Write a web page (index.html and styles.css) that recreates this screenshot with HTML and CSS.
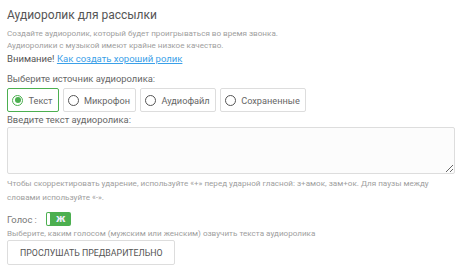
FILE: index.html
```html
<!DOCTYPE html>
<html lang="ru">
<head>
  <meta charset="UTF-8">
  <title>Аудиоролик для рассылки</title>
  <link rel="stylesheet" href="styles.css">
</head>
<body>

<section class="audio-form">
  <h1>Аудиоролик для рассылки</h1>
  <p class="hint">Создайте аудиоролик, который будет проигрываться во время звонка.</p>
  <p class="hint">Аудиоролики с музыкой имеют крайне низкое качество.</p>
  <p class="warning">Внимание! <a href="#">Как создать хороший ролик</a></p>

  <label class="field-label">Выберите источник аудиоролика:</label>
  <div class="sources">
    <label class="source active"><input type="radio" name="src" checked><span class="dot"></span>Текст</label>
    <label class="source"><input type="radio" name="src"><span class="dot"></span>Микрофон</label>
    <label class="source"><input type="radio" name="src"><span class="dot"></span>Аудиофайл</label>
    <label class="source"><input type="radio" name="src"><span class="dot"></span>Сохраненные</label>
  </div>

  <label class="field-label second" for="text">Введите текст аудиоролика:</label>
  <textarea id="text"></textarea>
  <p class="hint tall">Чтобы скорректировать ударение, используйте «+» перед ударной гласной: з+амок, зам+ок. Для паузы между словами используйте «-».</p>

  <div class="voice">
    <span>Голос :</span>
    <span class="toggle"><span class="knob"></span>ж</span>
  </div>
  <p class="hint voice-hint">Выберите, каким голосом (мужским или женским) озвучить текста аудиоролика</p>

  <button class="preview">ПРОСЛУШАТЬ ПРЕДВАРИТЕЛЬНО</button>
</section>

</body>
</html>
```

FILE: styles.css
```css
body {
  margin: 0;
  padding: 7px 7px 0 7px;
  font-family: Roboto, "Liberation Sans", sans-serif;
  color: #555;
  background: #fff;
}

h1 {
  margin: 0 0 4px 0;
  font-size: 12px;
  font-weight: 400;
  line-height: 16px;
  color: #555;
}

p {
  margin: 0;
}

.hint {
  font-size: 8.1px;
  line-height: 12px;
  color: #a0a0a0;
}

.hint.tall {
  margin-top: 2px;
  line-height: 14px;
}

.warning {
  margin-top: 1px;
  font-size: 9.5px;
  line-height: 14px;
  color: #555;
}

.warning a {
  color: #3aa0e8;
}

.field-label {
  display: block;
  margin-top: 7px;
  font-size: 9.4px;
  line-height: 12px;
  color: #666;
}

.field-label.second {
  margin-top: 2px;
}

.sources {
  display: flex;
  gap: 4px;
  margin-top: 3px;
}

.source {
  display: flex;
  align-items: center;
  gap: 5.5px;
  height: 22px;
  padding: 0 5px 0 4px;
  border: 1px solid #ddd;
  border-radius: 2px;
  font-size: 9.2px;
  color: #666;
}

.source input {
  display: none;
}

.source .dot {
  width: 9px;
  height: 9px;
  border: 1.5px solid #555;
  border-radius: 50%;
  box-sizing: content-box;
  position: relative;
}

.source.active {
  border-color: #4caf50;
}

.source.active .dot {
  border-color: #4caf50;
}

.source.active .dot::after {
  content: "";
  position: absolute;
  left: 1.5px;
  top: 1.5px;
  width: 6px;
  height: 6px;
  border-radius: 50%;
  background: #4caf50;
}

textarea {
  display: block;
  width: 100%;
  height: 47px;
  margin-top: 1px;
  box-sizing: border-box;
  border: 1px solid #ddd;
  border-radius: 2px;
  background: #fcfcfc;
}

.voice {
  display: flex;
  align-items: center;
  gap: 9px;
  margin-top: 8px;
  font-size: 9.4px;
  color: #777;
}

.toggle {
  display: flex;
  align-items: center;
  gap: 6px;
  width: 24px;
  height: 14px;
  padding: 0 0 0 1px;
  background: #4caf50;
  border-radius: 2px;
  color: #eef;
  font-weight: bold;
  font-size: 11px;
  line-height: 14px;
}

.knob {
  width: 3px;
  height: 12px;
  background: #fff;
  border-radius: 1px;
}

.voice-hint {
  margin-top: 1px;
}

.preview {
  display: block;
  margin-top: 1px;
  height: 25px;
  padding: 0 11px 0 12px;
  background: #fff;
  border: 1px solid #ddd;
  border-radius: 2px;
  font-family: Roboto, "Liberation Sans", sans-serif;
  font-size: 8.8px;
  color: #555;
}
```
